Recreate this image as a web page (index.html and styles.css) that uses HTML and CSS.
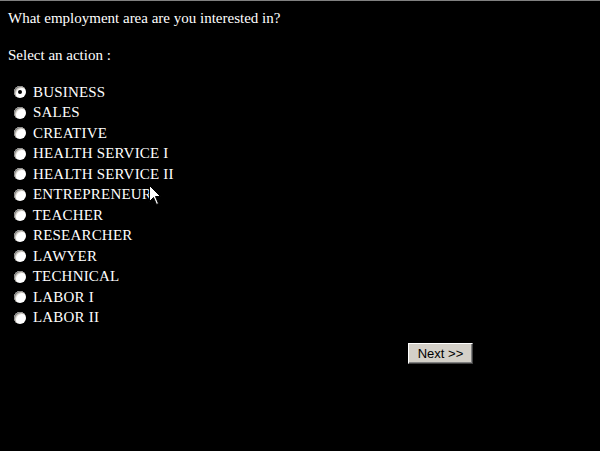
FILE: index.html
```html
<!DOCTYPE html>
<html>
<head>
<meta charset="utf-8">
<link rel="stylesheet" href="styles.css">
</head>
<body>
<div class="page">
  <p class="question">What employment area are you interested in?</p>
  <p class="prompt">Select an action :</p>
  <form class="options">
    <label class="opt"><input type="radio" name="area" checked> BUSINESS</label>
    <label class="opt"><input type="radio" name="area"> SALES</label>
    <label class="opt"><input type="radio" name="area"> CREATIVE</label>
    <label class="opt"><input type="radio" name="area"> HEALTH SERVICE I</label>
    <label class="opt"><input type="radio" name="area"> HEALTH SERVICE II</label>
    <label class="opt"><input type="radio" name="area"> ENTREPRENEUR</label>
    <label class="opt"><input type="radio" name="area"> TEACHER</label>
    <label class="opt"><input type="radio" name="area"> RESEARCHER</label>
    <label class="opt"><input type="radio" name="area"> LAWYER</label>
    <label class="opt"><input type="radio" name="area"> TECHNICAL</label>
    <label class="opt"><input type="radio" name="area"> LABOR I</label>
    <label class="opt"><input type="radio" name="area"> LABOR II</label>
    <div class="actions"><button type="button" class="next">Next &gt;&gt;</button></div>
  </form>
</div>
<svg class="cursor" width="12" height="20" viewBox="0 0 12 20">
  <path d="M0.5 0.5 L0.5 16.5 L4.5 12.5 L7.5 19.5 L9.5 18.5 L6.5 11.5 L11.5 11.5 Z" fill="#fff" stroke="#000" stroke-width="1"/>
</svg>
</body>
</html>
```

FILE: styles.css
```css
html, body {
  margin: 0;
  padding: 0;
  background: #000;
}
body {
  border-top: 1px solid #808080;
  height: 450px;
  overflow: hidden;
  position: relative;
  font-family: "Liberation Serif", "Times New Roman", serif;
  font-size: 15px;
  color: #fff;
}
.page {
  padding: 8px;
}
.question {
  margin: 0;
  line-height: 18px;
}
.prompt {
  margin: 19px 0 0 0;
  line-height: 18px;
}
.options {
  margin: 18px 0 0 0;
  display: flex;
  flex-direction: column;
}
.opt {
  display: flex;
  align-items: center;
  height: 20.5px;
  white-space: pre;
  letter-spacing: 0.2px;
}
.opt input {
  appearance: none;
  -webkit-appearance: none;
  width: 12px;
  height: 12px;
  margin: 0 3px 0 6px;
  border-radius: 50%;
  background: #fff;
  box-shadow: inset 1px 1px 0 #808080, inset 2px 2px 0 #d4d0c8;
  position: relative;
  flex: none;
}
.opt input:checked::after {
  content: "";
  position: absolute;
  left: 4px;
  top: 4px;
  width: 4px;
  height: 4px;
  border-radius: 50%;
  background: #000;
}
.actions {
  display: flex;
  margin-top: 15px;
  padding-left: 400px;
}
.next {
  width: 65px;
  height: 21px;
  padding: 0;
  background: #d4d0c8;
  border: 1px solid;
  border-color: #fff #404040 #404040 #fff;
  box-shadow: inset -1px -1px 0 #808080;
  font-family: "Liberation Sans", Arial, sans-serif;
  font-size: 13px;
  color: #000;
}
.cursor {
  position: absolute;
  left: 149px;
  top: 184px;
}
```
